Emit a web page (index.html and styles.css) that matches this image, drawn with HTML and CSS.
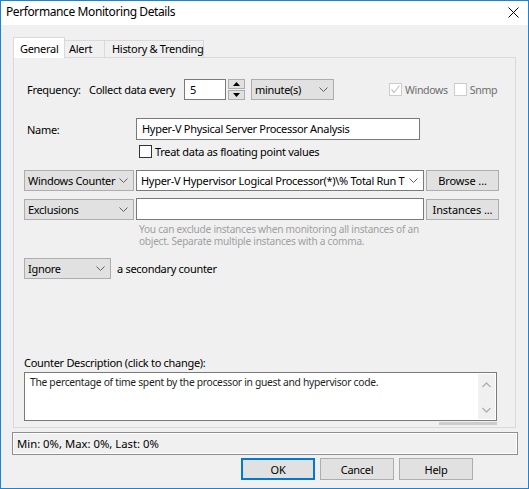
FILE: index.html
```html
<!DOCTYPE html>
<html>
<head>
<meta charset="utf-8">
<link rel="stylesheet" href="styles.css">
</head>
<body>
<div class="window">
  <div class="titlebar">
    <span class="title">Performance Monitoring Details</span>
    <svg class="close" width="11" height="11" viewBox="0 0 11 11"><path d="M0.5 0.5L10.5 10.5M10.5 0.5L0.5 10.5" stroke="#000" stroke-width="1"/></svg>
  </div>
  <div class="client">
    <div class="tabs">
      <div class="tab active">General</div>
      <div class="tab">Alert</div>
      <div class="tab">History &amp; Trending</div>
    </div>
    <div class="panel">
      <div class="row freq">
        <span class="lbl freqlbl">Frequency:</span>
        <span class="collect">Collect data every</span>
        <div class="input num">5</div>
        <div class="spin">
          <div class="spinbtn"><svg width="7" height="4" viewBox="0 0 7 4"><path d="M3.5 0L7 4H0Z" fill="#000"/></svg></div>
          <div class="spinbtn"><svg width="7" height="4" viewBox="0 0 7 4"><path d="M0 0H7L3.5 4Z" fill="#000"/></svg></div>
        </div>
        <div class="combo unit"><span>minute(s)</span><svg class="chev" width="9" height="5" viewBox="0 0 9 5"><path d="M0.5 0.5L4.5 4.5L8.5 0.5" fill="none" stroke="#606060"/></svg></div>
        <div class="checks">
          <span class="cb disabled"><svg width="11" height="11" viewBox="0 0 11 11"><path d="M1.5 5.5L4 8.5L9.5 1.5" fill="none" stroke="#c4c4c4" stroke-width="1.2"/></svg></span>
          <span class="cbl">Windows</span>
          <span class="cb light"></span>
          <span class="cbl">Snmp</span>
        </div>
      </div>
      <div class="row name">
        <span class="lbl namelbl">Name:</span>
        <div class="input nameinput">Hyper-V Physical Server Processor Analysis</div>
      </div>
      <div class="row floatrow">
        <span class="cb dark"></span>
        <span class="cbtext">Treat data as floating point values</span>
      </div>
      <div class="row counter">
        <div class="combo type"><span>Windows Counter</span><svg class="chev" width="9" height="5" viewBox="0 0 9 5"><path d="M0.5 0.5L4.5 4.5L8.5 0.5" fill="none" stroke="#606060"/></svg></div>
        <div class="input wide editcombo"><span class="clip">Hyper-V Hypervisor Logical Processor(*)\% Total Run Time</span><svg class="chev" width="9" height="5" viewBox="0 0 9 5"><path d="M0.5 0.5L4.5 4.5L8.5 0.5" fill="none" stroke="#606060"/></svg></div>
        <div class="btn side">Browse ...</div>
      </div>
      <div class="row excl">
        <div class="combo type"><span>Exclusions</span><svg class="chev" width="9" height="5" viewBox="0 0 9 5"><path d="M0.5 0.5L4.5 4.5L8.5 0.5" fill="none" stroke="#606060"/></svg></div>
        <div class="input wide"></div>
        <div class="btn side">Instances ...</div>
      </div>
      <p class="hint">You can exclude instances when monitoring all instances of an<br>object. Separate multiple instances with a comma.</p>
      <div class="row ignore">
        <div class="combo ign"><span>Ignore</span><svg class="chev" width="9" height="5" viewBox="0 0 9 5"><path d="M0.5 0.5L4.5 4.5L8.5 0.5" fill="none" stroke="#606060"/></svg></div>
        <span class="sec">a secondary counter</span>
      </div>
      <div class="desclbl">Counter Description (click to change):</div>
      <div class="textarea">
        <div class="desctext">The percentage of time spent by the processor in guest and hypervisor code.</div>
        <div class="vscroll">
          <svg width="9" height="6" viewBox="0 0 9 6"><path d="M0.5 5L4.5 1L8.5 5" fill="none" stroke="#b0b0b0" stroke-width="1.3"/></svg>
          <svg width="9" height="6" viewBox="0 0 9 6"><path d="M0.5 1L4.5 5L8.5 1" fill="none" stroke="#b0b0b0" stroke-width="1.3"/></svg>
        </div>
      </div>
      <div class="sliver"></div>
    </div>
    <div class="status">Min: 0%, Max: 0%, Last: 0%</div>
    <div class="buttons">
      <div class="btn dlg default">OK</div>
      <div class="btn dlg">Cancel</div>
      <div class="btn dlg">Help</div>
    </div>
  </div>
</div>
</body>
</html>
```
FILE: styles.css
```css
* { box-sizing: border-box; }
html, body { margin: 0; padding: 0; }
body {
  width: 529px;
  height: 489px;
  font-family: "Noto Sans", "Open Sans", sans-serif;
  font-size: 11px;
  letter-spacing: -0.3px;
  color: #000;
  overflow: hidden;
}
.window {
  width: 529px;
  height: 489px;
  border: 1px solid #1883d7;
  background: #f0f0f0;
  display: flex;
  flex-direction: column;
  white-space: nowrap;
}
.titlebar {
  height: 24px;
  background: #fff;
  display: flex;
  align-items: center;
  justify-content: space-between;
  padding: 0 9px 0 5px;
  flex: none;
}
.title { font-size: 12px; letter-spacing: -0.4px; margin-top: -3px; }
.close { margin-top: -2px; }
.client {
  flex: 1;
  padding: 12px 11px 0 11px;
  display: flex;
  flex-direction: column;
}
.tabs {
  display: flex;
  align-items: flex-end;
  height: 20px;
  position: relative;
  z-index: 1;
  flex: none;
}
.tab {
  height: 17px;
  border: 1px solid #d9d9d9;
  border-bottom: none;
  background: #f0f0f0;
  padding: 0 0 0 4px;
  line-height: 16px;
  margin-left: -1px;
  flex: none;
}
.tab:nth-child(2) { width: 41px; }
.tab:nth-child(3) { width: 100px; padding-left: 7px; }
.tab.active {
  height: 21px;
  width: 52px;
  background: #fff;
  margin-left: 1px;
  padding: 3px 0 0 6px;
  margin-bottom: -1px;
}
.panel {
  height: 371px;
  margin: 0 1px;
  border: 1px solid #d9d9d9;
  padding: 0 0 0 10px;
  display: flex;
  flex-direction: column;
  flex: none;
}
.row { display: flex; align-items: center; flex: none; }
.row > * { flex: none; }
.lbl { margin-left: 3px; }
.freqlbl { width: 62px; }
.freq { margin-top: 21px; height: 21px; }
.collect { width: 95px; }
.input {
  background: #fff;
  border: 1px solid #7a7a7a;
  height: 21px;
  line-height: 19px;
  padding: 0 4px;
  overflow: hidden;
}
.num { width: 42px; padding-left: 5px; }
.spin {
  width: 17px;
  height: 21px;
  margin-left: 2px;
  display: flex;
  flex-direction: column;
  gap: 1px;
}
.spinbtn {
  flex: 1;
  background: #e1e1e1;
  border: 1px solid #adadad;
  display: flex;
  align-items: center;
  justify-content: center;
}
.combo {
  height: 21px;
  background: #e1e1e1;
  border: 1px solid #adadad;
  display: flex;
  align-items: center;
  justify-content: space-between;
  padding: 0 5px 0 3px;
}
.unit { width: 83px; margin-left: 6px; }
.checks { display: flex; align-items: center; margin-left: 55px; }
.cb {
  width: 13px;
  height: 13px;
  border: 1px solid #333;
  background: #fff;
  display: inline-flex;
  align-items: center;
  justify-content: center;
  flex: none;
}
.cb.disabled { border-color: #cccccc; }
.cb.light { border-color: #cccccc; margin-left: 6px; }
.cbl { margin-left: 3px; color: #6d6d6d; font-size: 10.6px; letter-spacing: -0.35px; }
.name { margin-top: 18px; height: 22px; }
.namelbl { width: 109px; }
.nameinput { width: 284px; height: 22px; line-height: 20px; padding-left: 5px; }
.floatrow { margin-top: 5px; height: 13px; padding-left: 115px; }
.cbtext { margin-left: 3px; }
.counter { margin-top: 12px; height: 21px; }
.type { width: 110px; }
.wide { width: 288px; margin-left: 2px; height: 21px; }
.editcombo {
  display: flex;
  align-items: center;
  justify-content: space-between;
  padding: 0 5px 0 4px;
}
.clip { overflow: hidden; width: 264px; }
.btn {
  background: #e1e1e1;
  border: 1px solid #adadad;
  display: flex;
  align-items: center;
  justify-content: center;
}
.side { width: 73px; height: 21px; margin-left: 2px; letter-spacing: -0.1px; }
.excl { margin-top: 7px; height: 22px; }
.excl .type { height: 21px; }
.excl .wide { height: 22px; }
.hint {
  margin: 3px 0 0 115px;
  color: #a0a0a0;
  font-size: 10.1px;
  letter-spacing: -0.25px;
  line-height: 12px;
}
.ignore { margin-top: 11px; height: 21px; }
.ign { width: 87px; }
.sec { margin-left: 6px; }
.desclbl { margin-top: 76px; line-height: 16px; }
.textarea {
  margin-top: 1px;
  width: 473px;
  height: 49px;
  background: #fff;
  border: 1px solid #7a7a7a;
  display: flex;
  justify-content: space-between;
  flex: none;
}
.desctext { padding: 2px 0 0 5px; font-size: 10.3px; letter-spacing: -0.3px; color: #1e1e1e; }
.vscroll {
  width: 17px;
  background: #f0f0f0;
  display: flex;
  flex-direction: column;
  align-items: center;
  justify-content: space-between;
  padding: 8px 0 6px;
  margin: 1px 1px 1px 0;
}
.sliver {
  width: 58px;
  height: 3px;
  background: #cdcdcd;
  margin: 1px 0 0 415px;
  flex: none;
}
.status {
  margin-top: 4px;
  height: 23px;
  width: 506px;
  border: 1px solid #8e8e8e;
  box-shadow: inset 1px 1px 0 #fff, inset -1px -1px 0 #fff;
  padding: 0 4px;
  line-height: 21px;
  font-size: 11.3px;
  letter-spacing: 0;
  flex: none;
}
.buttons {
  display: flex;
  gap: 5px;
  margin: 3px 0 0 229px;
}
.dlg { width: 74px; height: 22px; flex: none; }
.default { border: 2px solid #0078d7; }
```
